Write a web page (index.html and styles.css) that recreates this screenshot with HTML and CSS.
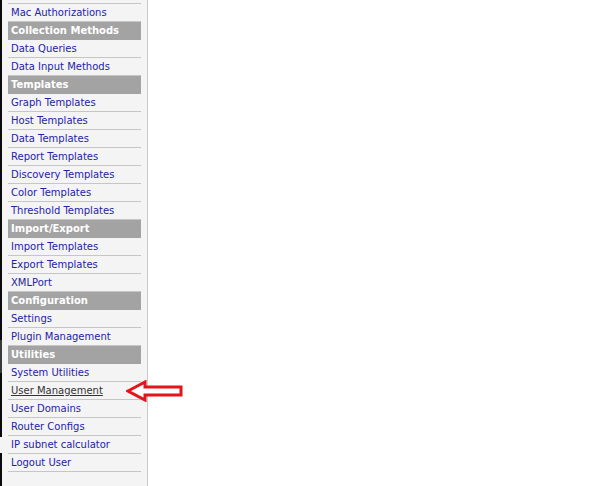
FILE: index.html
```html
<!DOCTYPE html>
<html>
<head>
<meta charset="utf-8">
<link rel="stylesheet" href="styles.css">
</head>
<body>
<div class="page">
  <div class="edge">
    <div class="e1"></div><div class="e2"></div><div class="e3"></div><div class="e4"></div><div class="e5"></div>
  </div>
  <nav class="sidebar">
    <ul class="menu">
      <li class="stub"></li>
      <li class="item"><a href="#">Mac Authorizations</a></li>
      <li class="head">Collection Methods</li>
      <li class="item"><a href="#">Data Queries</a></li>
      <li class="item"><a href="#">Data Input Methods</a></li>
      <li class="head">Templates</li>
      <li class="item"><a href="#">Graph Templates</a></li>
      <li class="item"><a href="#">Host Templates</a></li>
      <li class="item"><a href="#">Data Templates</a></li>
      <li class="item"><a href="#">Report Templates</a></li>
      <li class="item"><a href="#">Discovery Templates</a></li>
      <li class="item"><a href="#">Color Templates</a></li>
      <li class="item"><a href="#">Threshold Templates</a></li>
      <li class="head">Import/Export</li>
      <li class="item"><a href="#">Import Templates</a></li>
      <li class="item"><a href="#">Export Templates</a></li>
      <li class="item"><a href="#">XMLPort</a></li>
      <li class="head">Configuration</li>
      <li class="item"><a href="#">Settings</a></li>
      <li class="item"><a href="#">Plugin Management</a></li>
      <li class="head">Utilities</li>
      <li class="item"><a href="#">System Utilities</a></li>
      <li class="item active"><a href="#">User Management</a>
        <svg class="arrow" width="58" height="22" viewBox="0 0 58 22">
          <path d="M2 11 L19 2 L19 7 L55 7 L55 15 L19 15 L19 20 Z" fill="#fff" stroke="#e3141b" stroke-width="3" stroke-linejoin="miter"/>
        </svg>
      </li>
      <li class="item"><a href="#">User Domains</a></li>
      <li class="item"><a href="#">Router Configs</a></li>
      <li class="item"><a href="#">IP subnet calculator</a></li>
      <li class="item"><a href="#">Logout User</a></li>
    </ul>
  </nav>
  <main class="content"></main>
</div>
</body>
</html>
```
FILE: styles.css
```css
html, body {
  margin: 0;
  padding: 0;
  background: #ffffff;
}
.page {
  display: flex;
  height: 486px;
  width: 614px;
  overflow: hidden;
}
.edge {
  width: 2px;
  display: flex;
  flex-direction: column;
  flex: none;
}
.e1 { height: 340px; background: #0a0a0a; }
.e2 { height: 33px; background: #3a3a3a; }
.e3 { height: 64px; background: #0a0a0a; }
.e4 { height: 16px; background: #f4f4f4; }
.e5 { flex: 1; background: #0a0a0a; }
.sidebar {
  width: 145px;
  flex: none;
  background: #f4f4f4;
  border-right: 1px solid #c9c9c9;
  padding: 0 6px 0 6px;
  box-sizing: border-box;
  width: 146px;
}
.menu {
  list-style: none;
  margin: 0;
  padding: 0;
  font-family: "DejaVu Sans", Verdana, sans-serif;
  font-size: 10px;
}
.stub {
  height: 3px;
  border-bottom: 1px solid #c6c6c6;
}
.item {
  height: 17px;
  line-height: 17px;
  border-bottom: 1px solid #c6c6c6;
  padding-left: 3px;
  position: relative;
  white-space: nowrap;
}
.item a {
  color: #2323a8;
  text-decoration: none;
}
.item.active a {
  color: #333333;
  text-decoration: underline;
}
.head {
  height: 18px;
  line-height: 18px;
  background: #a3a3a3;
  color: #ffffff;
  font-weight: bold;
  padding-left: 3px;
  white-space: nowrap;
}
.arrow {
  position: absolute;
  left: 118px;
  top: -2px;
}
.content {
  flex: 1;
  background: #ffffff;
}
```
